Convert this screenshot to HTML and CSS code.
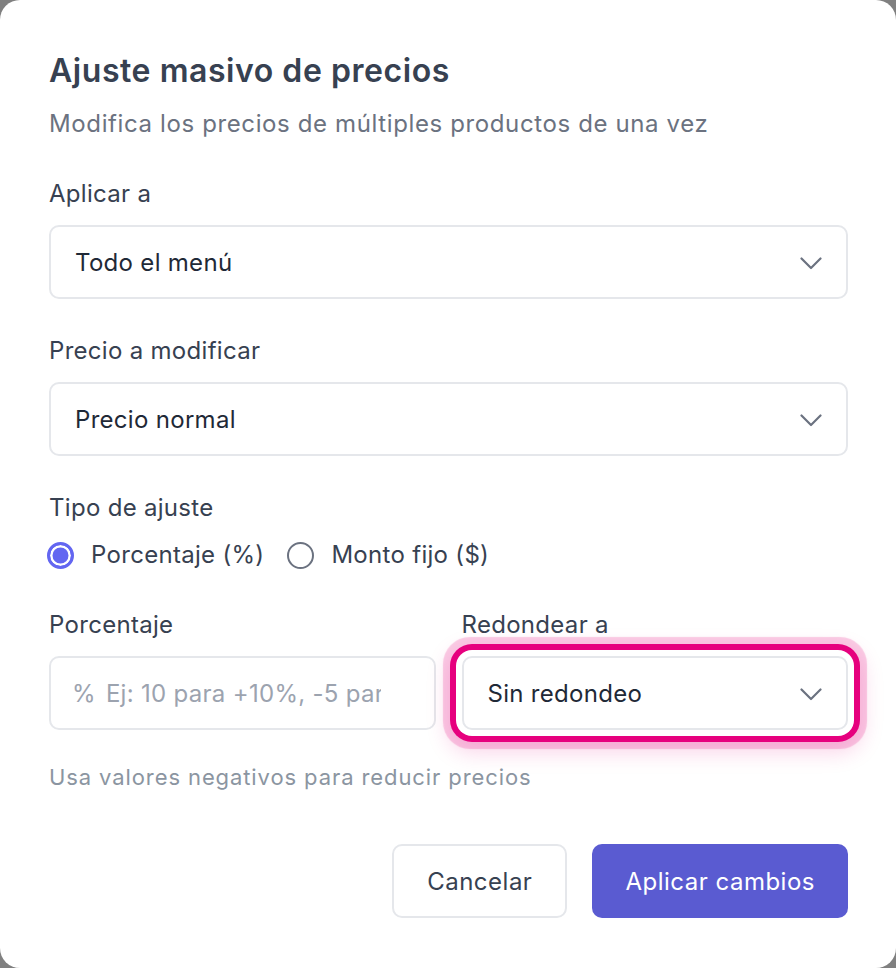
FILE: index.html
```html
<!DOCTYPE html>
<html lang="es">
<head>
<meta charset="utf-8">
<title>Ajuste masivo de precios</title>
<link rel="stylesheet" href="styles.css">
</head>
<body>
<div class="modal">
  <h1 class="title">Ajuste masivo de precios</h1>
  <p class="subtitle">Modifica los precios de múltiples productos de una vez</p>

  <div class="field first">
    <label class="label">Aplicar a</label>
    <div class="select">
      <span class="select-value">Todo el menú</span>
      <svg class="chevron" viewBox="0 0 22 13" width="22" height="13"><path d="M1.5 1.5L11 11l9.5-9.5" fill="none" stroke="currentColor" stroke-width="2.2" stroke-linecap="round" stroke-linejoin="round"/></svg>
    </div>
  </div>

  <div class="field">
    <label class="label">Precio a modificar</label>
    <div class="select">
      <span class="select-value">Precio normal</span>
      <svg class="chevron" viewBox="0 0 22 13" width="22" height="13"><path d="M1.5 1.5L11 11l9.5-9.5" fill="none" stroke="currentColor" stroke-width="2.2" stroke-linecap="round" stroke-linejoin="round"/></svg>
    </div>
  </div>

  <div class="field">
    <label class="label">Tipo de ajuste</label>
    <div class="radios">
      <div class="radio-item"><span class="radio checked"></span><span class="radio-text">Porcentaje (%)</span></div>
      <div class="radio-item"><span class="radio"></span><span class="radio-text">Monto fijo ($)</span></div>
    </div>
  </div>

  <div class="row">
    <div class="col">
      <label class="label">Porcentaje</label>
      <div class="input">
        <span class="prefix">%</span>
        <span class="placeholder">Ej: 10 para +10%, -5 para -5%</span>
      </div>
    </div>
    <div class="col">
      <label class="label">Redondear a</label>
      <div class="select focused">
        <span class="select-value">Sin redondeo</span>
        <svg class="chevron" viewBox="0 0 22 13" width="22" height="13"><path d="M1.5 1.5L11 11l9.5-9.5" fill="none" stroke="currentColor" stroke-width="2.2" stroke-linecap="round" stroke-linejoin="round"/></svg>
      </div>
    </div>
  </div>
  <p class="help">Usa valores negativos para reducir precios</p>

  <div class="actions">
    <button class="btn btn-secondary">Cancelar</button>
    <button class="btn btn-primary">Aplicar cambios</button>
  </div>
</div>
</body>
</html>
```

FILE: styles.css
```css
* { box-sizing: border-box; }
html, body {
  margin: 0;
  padding: 0;
  background: #808080;
}
body {
  font-family: "Inter", "Noto Sans", sans-serif;
  color: #374151;
}
.modal {
  width: 896px;
  height: 968px;
  background: #ffffff;
  border-radius: 20px;
  padding: 51px 48px 0 49px;
}
.title {
  margin: 0;
  font-size: 32px;
  line-height: 40px;
  font-weight: 600;
  letter-spacing: 0.55px;
  color: #374151;
}
.subtitle {
  margin: 17px 0 0;
  font-size: 24px;
  line-height: 32px;
  color: #6b7280;
  letter-spacing: 0.62px;
}
.field {
  margin-top: 36px;
}
.field.first { margin-top: 38px; }
.label {
  display: block;
  font-size: 24px;
  line-height: 32px;
  color: #374151;
  letter-spacing: 0.3px;
  margin-bottom: 15px;
}
.select {
  height: 74px;
  border: 2px solid #e5e7eb;
  border-radius: 10px;
  background: #fff;
  display: flex;
  align-items: center;
  justify-content: space-between;
  padding: 0 24px 0 24px;
}
.select-value {
  font-size: 24px;
  color: #1f2937;
  letter-spacing: 0.3px;
}
.chevron {
  color: #6b7280;
  margin-top: 2px;
}
.radios {
  display: flex;
  align-items: center;
  gap: 25px;
  margin-top: 1px;
  height: 32px;
}
.radio-item {
  display: flex;
  align-items: center;
  gap: 17px;
  font-size: 24px;
  line-height: 32px;
  color: #374151;
  letter-spacing: 0.3px;
}
.radio {
  width: 27px;
  height: 27px;
  margin-left: -2px;
  border-radius: 50%;
  border: 2px solid #6b7280;
  background: #fff;
  display: inline-block;
  flex: none;
}
.radio.checked {
  border: 3px solid #6366f1;
  box-shadow: inset 0 0 0 2.5px #fff;
  background: #6366f1;
}
.row {
  display: grid;
  grid-template-columns: minmax(0, 1fr) minmax(0, 1fr);
  gap: 26px;
  margin-top: 38px;
}
.col {
  min-width: 0;
}
.input {
  height: 74px;
  border: 2px solid #e5e7eb;
  border-radius: 10px;
  display: flex;
  align-items: center;
  padding: 0 53px 0 21px;
  overflow: hidden;
  white-space: nowrap;
  color: #9ca3af;
  font-size: 24px;
  letter-spacing: 0.3px;
}
.prefix {
  margin-right: 10px;
  flex: none;
}
.placeholder {
  overflow: hidden;
  min-width: 0;
  flex: 1 1 auto;
}
.select.focused {
  box-shadow:
    0 0 0 6px #ffffff,
    0 0 0 12px #e6007e,
    0 0 1px 19px rgba(230, 0, 126, 0.2),
    0 8px 22px 14px rgba(230, 0, 126, 0.18);
}
.help {
  margin: 32px 0 0;
  font-size: 22px;
  line-height: 30px;
  color: #8b95a1;
  letter-spacing: 0.9px;
}
.actions {
  display: flex;
  justify-content: flex-end;
  gap: 25px;
  margin-top: 52px;
}
.btn {
  height: 74px;
  border-radius: 10px;
  font-family: inherit;
  font-size: 24px;
  letter-spacing: 0.5px;
  padding: 0 33px;
}
.btn-secondary {
  background: #fff;
  border: 2px solid #e5e7eb;
  color: #374151;
}
.btn-primary {
  background: #5a5bd1;
  border: none;
  color: #fff;
}
```
